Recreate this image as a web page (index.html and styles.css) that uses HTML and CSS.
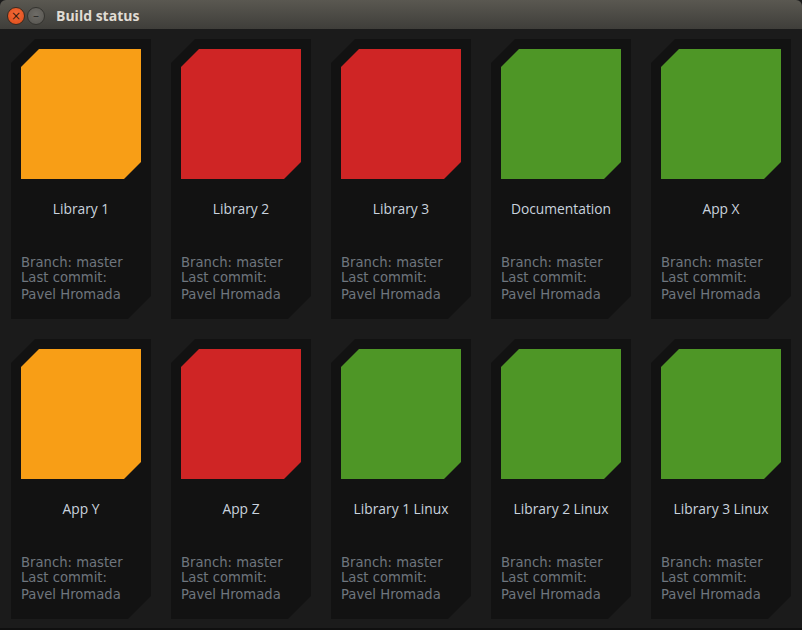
FILE: index.html
```html
<!DOCTYPE html>
<html>
<head>
<meta charset="utf-8">
<link rel="stylesheet" href="styles.css">
</head>
<body>
<div class="window">
  <div class="titlebar">
    <span class="btn close">×</span>
    <span class="btn min">–</span>
    <span class="title">Build status</span>
  </div>
  <div class="grid">
    <div class="tile"><div class="swatch orange"></div><div class="name">Library 1</div><div class="info"><div>Branch: master</div><div>Last commit:</div><div class="author">Pavel Hromada</div></div></div>
    <div class="tile"><div class="swatch red"></div><div class="name">Library 2</div><div class="info"><div>Branch: master</div><div>Last commit:</div><div class="author">Pavel Hromada</div></div></div>
    <div class="tile"><div class="swatch red"></div><div class="name">Library 3</div><div class="info"><div>Branch: master</div><div>Last commit:</div><div class="author">Pavel Hromada</div></div></div>
    <div class="tile"><div class="swatch green"></div><div class="name">Documentation</div><div class="info"><div>Branch: master</div><div>Last commit:</div><div class="author">Pavel Hromada</div></div></div>
    <div class="tile"><div class="swatch green"></div><div class="name">App X</div><div class="info"><div>Branch: master</div><div>Last commit:</div><div class="author">Pavel Hromada</div></div></div>
    <div class="tile"><div class="swatch orange"></div><div class="name">App Y</div><div class="info"><div>Branch: master</div><div>Last commit:</div><div class="author">Pavel Hromada</div></div></div>
    <div class="tile"><div class="swatch red"></div><div class="name">App Z</div><div class="info"><div>Branch: master</div><div>Last commit:</div><div class="author">Pavel Hromada</div></div></div>
    <div class="tile"><div class="swatch green"></div><div class="name">Library 1 Linux</div><div class="info"><div>Branch: master</div><div>Last commit:</div><div class="author">Pavel Hromada</div></div></div>
    <div class="tile"><div class="swatch green"></div><div class="name">Library 2 Linux</div><div class="info"><div>Branch: master</div><div>Last commit:</div><div class="author">Pavel Hromada</div></div></div>
    <div class="tile"><div class="swatch green"></div><div class="name">Library 3 Linux</div><div class="info"><div>Branch: master</div><div>Last commit:</div><div class="author">Pavel Hromada</div></div></div>
  </div>
</div>
</body>
</html>
```
FILE: styles.css
```css
html, body {
  margin: 0;
  padding: 0;
  background: #1b1b1b;
}
.window {
  width: 802px;
  height: 630px;
  box-sizing: border-box;
  background: #1b1b1b;
  border-bottom: 2px solid #0f0f0f;
  border-top-left-radius: 6px;
  border-top-right-radius: 6px;
  overflow: hidden;
}
.titlebar {
  height: 29px;
  background: linear-gradient(#5a5851, #3f3e3a);
  display: flex;
  align-items: center;
  padding-left: 7px;
  padding-top: 2px;
  box-sizing: border-box;
}
.btn {
  width: 18px;
  height: 18px;
  border-radius: 50%;
  display: flex;
  align-items: center;
  justify-content: center;
  font-family: "DejaVu Sans", sans-serif;
  font-size: 12px;
  line-height: 1;
  box-sizing: border-box;
}
.close {
  background: radial-gradient(circle at 50% 40%, #f26b3a, #de4b18);
  border: 1px solid #3a2a20;
  color: #3a1a0c;
}
.min {
  margin-left: 2px;
  background: radial-gradient(circle at 50% 40%, #6e6c67, #56544f);
  border: 1px solid #34332f;
  color: #2c2b28;
}
.title {
  margin-left: 11px;
  font-family: "Open Sans", "DejaVu Sans", sans-serif;
  font-weight: 700;
  font-size: 14px;
  color: #e0dcd4;
}
.grid {
  display: grid;
  grid-template-columns: repeat(5, 140px);
  grid-auto-rows: 280px;
  column-gap: 20px;
  row-gap: 20px;
  padding: 10px 11px 0 11px;
}
.tile {
  background: #121212;
  clip-path: polygon(24px 0, 100% 0, 100% calc(100% - 23px), calc(100% - 23px) 100%, 0 100%, 0 24px);
  padding: 10px;
  display: flex;
  flex-direction: column;
}
.swatch {
  width: 120px;
  height: 130px;
  clip-path: polygon(18px 0, 100% 0, 100% calc(100% - 17px), calc(100% - 17px) 100%, 0 100%, 0 18px);
}
.orange { background: #f89e16; }
.red { background: #cf2525; }
.green { background: #4e9626; }
.name {
  margin-top: 21px;
  text-align: center;
  font-family: "Open Sans", "DejaVu Sans", sans-serif;
  font-size: 13.8px;
  line-height: 18px;
  color: #c9d2de;
}
.info {
  margin-top: 37px;
  font-family: "DejaVu Sans", sans-serif;
  font-size: 13.2px;
  line-height: 15px;
  color: #6f767e;
}
.author {
  margin-top: 2px;
}
```
